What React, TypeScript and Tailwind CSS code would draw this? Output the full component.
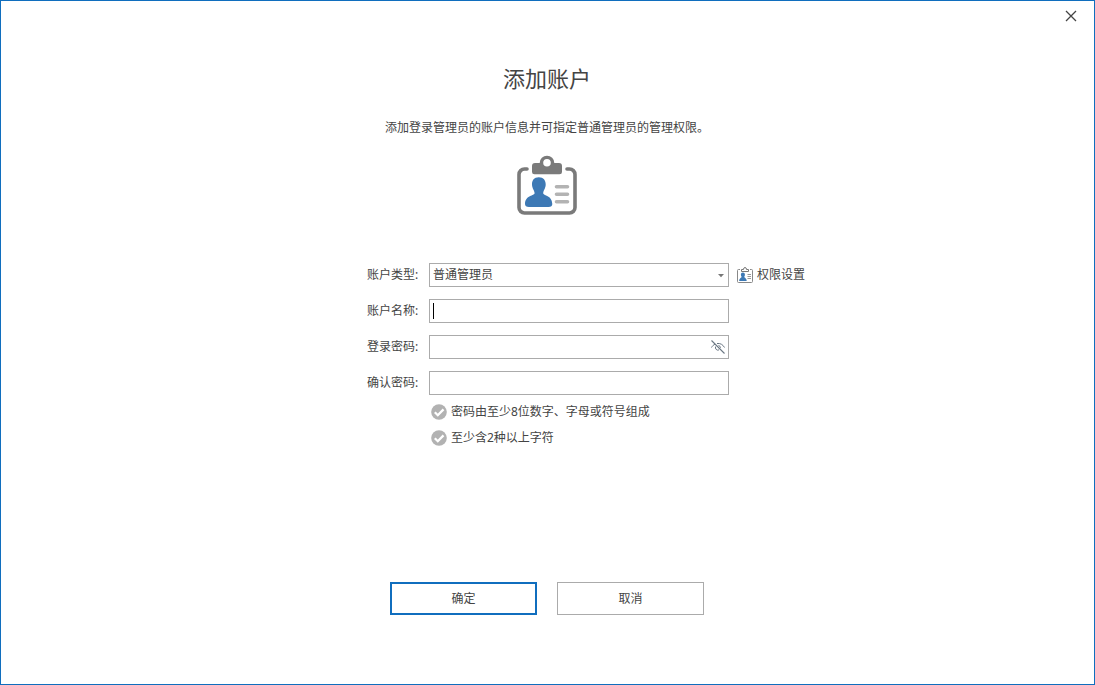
import React from 'react';

interface FormRowProps {
  id: string;
  label: string;
  children: React.ReactNode;
  extra?: React.ReactNode;
}

const FormRow: React.FC<FormRowProps> = ({ id, label, children, extra }) => (
  <div className="grid grid-cols-[1fr_62px_300px_1fr] items-center">
    <label htmlFor={id} className="col-start-2 whitespace-nowrap">
      {label}
    </label>
    <div className="relative">{children}</div>
    <div className="pl-2">{extra}</div>
  </div>
);

const inputClass =
  'block h-6 w-full appearance-none rounded-none border border-[#ababab] bg-white px-[3px] outline-none';

const BadgeIcon: React.FC = () => (
  <svg className="h-15 w-15" viewBox="0 0 60 60" fill="none">
    <path
      d="M10 14H7.5A5.5 5.5 0 0 0 2 19.5V52.5A5.5 5.5 0 0 0 7.5 58H52.5A5.5 5.5 0 0 0 58 52.5V19.5A5.5 5.5 0 0 0 52.5 14H50"
      stroke="#7a7a7a"
      strokeWidth="3.6"
      strokeLinecap="round"
    />
    <path
      fill="#7a7a7a"
      fillRule="evenodd"
      d="M18 8H22.7A7.3 7.3 0 0 1 37.3 8H42Q45 8 45 11V17Q45 19.3 42.5 19.3H17.5Q15 19.3 15 17V11Q15 8 18 8ZM30 4A3.8 3.8 0 1 0 30 11.6A3.8 3.8 0 1 0 30 4Z"
    />
    <path
      fill="#3d79b5"
      d="M21.8 22.3C26.5 22.3 28.8 25.5 28.7 29.5C28.6 33.5 26.5 35 26.2 38C26 41 35.3 40 35.3 49Q35.3 52 31.5 52H12Q8 52 8 49C8 40 17.8 41 17.6 38C17.3 35 15.1 33.5 15 29.5C14.9 25.5 17 22.3 21.8 22.3Z"
    />
    <path
      d="M39.5 31.8H50.5M39.5 39.3H50.5M39.5 46.8H50.5"
      stroke="#b3b3b3"
      strokeWidth="3.6"
      strokeLinecap="round"
    />
  </svg>
);

const SmallBadgeIcon: React.FC = () => (
  <svg className="h-4 w-4" viewBox="0 0 16 16" fill="none">
    <path
      d="M3 2.5H1.5Q.5 2.5 .5 3.5V14.5Q.5 15.5 1.5 15.5H14.5Q15.5 15.5 15.5 14.5V3.5Q15.5 2.5 14.5 2.5H13"
      stroke="#888"
    />
    <path d="M4.5 4.5V2.5H6.5Q6.5 .5 8 .5T9.5 2.5H11.5V4.5Z" stroke="#777" />
    <path
      d="M5.9 5.5C7.4 5.5 8 6.5 7.9 7.9C7.8 9 7.2 9.3 7.3 10C7.4 10.8 9.7 11 9.7 14H2.2C2.2 11 4.5 10.8 4.6 10C4.7 9.3 4 9 3.9 7.9C3.8 6.5 4.4 5.5 5.9 5.5Z"
      fill="#3d79b5"
    />
    <path d="M10.5 7.5H14M10.5 9.5H14M10.5 11.5H14" stroke="#999" />
  </svg>
);

const EyeOffIcon: React.FC = () => (
  <svg className="h-4 w-4" viewBox="0 0 16 16" fill="none" stroke="#6b7784">
    <path d="M1.5 1.5L14.5 14.5" strokeWidth="1.1" />
    <path d="M1.5 8.5C2.5 6.8 3.6 5.8 5 5.1M7 4.5C10.5 4 13 5.8 14.5 8.5" />
    <path d="M5.7 7.5A2.5 2.5 0 0 0 9 10.9M8.5 6.5A2.5 2.5 0 0 1 10.5 8.8" />
  </svg>
);

const Rule: React.FC<{ children: React.ReactNode }> = ({ children }) => (
  <li className="flex h-4 items-center gap-1">
    <svg className="h-4 w-4" viewBox="0 0 16 16" fill="none">
      <circle cx="8" cy="8" r="7.8" fill="#b2b2b2" />
      <path d="M3.8 8.2L6.8 11.2L12.5 5.4" stroke="#fff" strokeWidth="2.3" />
    </svg>
    {children}
  </li>
);

export default function App() {
  return (
    <main className="flex min-h-screen flex-col border border-[#106ebe] bg-white pr-px font-['Noto_Sans','Noto_Sans_CJK_SC',sans-serif] text-xs text-[#444]">
      <header className="flex h-[31px] justify-end">
        <button type="button" aria-label="关闭" className="flex h-[30px] w-11 items-center justify-center">
          <svg className="h-3 w-3" viewBox="0 0 12 12" stroke="#444" strokeWidth="1.3">
            <path d="M1 1L11 11M11 1L1 11" />
          </svg>
        </button>
      </header>

      <section className="mt-8 flex flex-col items-center">
        <h1 className="text-[22px] leading-7 font-normal">添加账户</h1>
        <p className="mt-7 mb-[19px] leading-4">添加登录管理员的账户信息并可指定普通管理员的管理权限。</p>
        <BadgeIcon />
      </section>

      <form id="account" className="mt-12 flex flex-col gap-3 pl-0.5" onSubmit={e => e.preventDefault()}>
        <FormRow
          id="type"
          label="账户类型:"
          extra={
            <button type="button" className="flex items-center gap-1 whitespace-nowrap">
              <SmallBadgeIcon />
              权限设置
            </button>
          }
        >
          <select id="type" className={inputClass}>
            <option>普通管理员</option>
          </select>
          <svg className="pointer-events-none absolute top-2.5 right-1 h-1.5 w-2" viewBox="0 0 8 6" fill="#777">
            <path d="M1 1H7L4 4.2Z" />
          </svg>
        </FormRow>
        <FormRow id="name" label="账户名称:">
          <input id="name" type="text" className={`${inputClass} caret-transparent`} />
          <span className="pointer-events-none absolute top-1 left-1 h-4 w-px bg-black" />
        </FormRow>
        <FormRow id="password" label="登录密码:">
          <input id="password" type="password" className={inputClass} />
          <button type="button" aria-label="显示密码" className="absolute top-1 right-[3px]">
            <EyeOffIcon />
          </button>
        </FormRow>
        <FormRow id="confirm" label="确认密码:">
          <input id="confirm" type="password" className={inputClass} />
        </FormRow>
      </form>

      <div className="mt-[9px] grid grid-cols-[1fr_62px_300px_1fr] pl-0.5">
        <ul className="col-start-3 ml-0.5 flex flex-col gap-2.5">
          <Rule>密码由至少8位数字、字母或符号组成</Rule>
          <Rule>至少含2种以上字符</Rule>
        </ul>
      </div>

      <footer className="mt-auto flex justify-center gap-5 pt-8 pb-[69px]">
        <button type="submit" form="account" className="h-[33px] w-[147px] border-2 border-[#106ebe]">
          确定
        </button>
        <button type="button" className="h-[33px] w-[147px] border border-[#ababab]">
          取消
        </button>
      </footer>
    </main>
  );
}
